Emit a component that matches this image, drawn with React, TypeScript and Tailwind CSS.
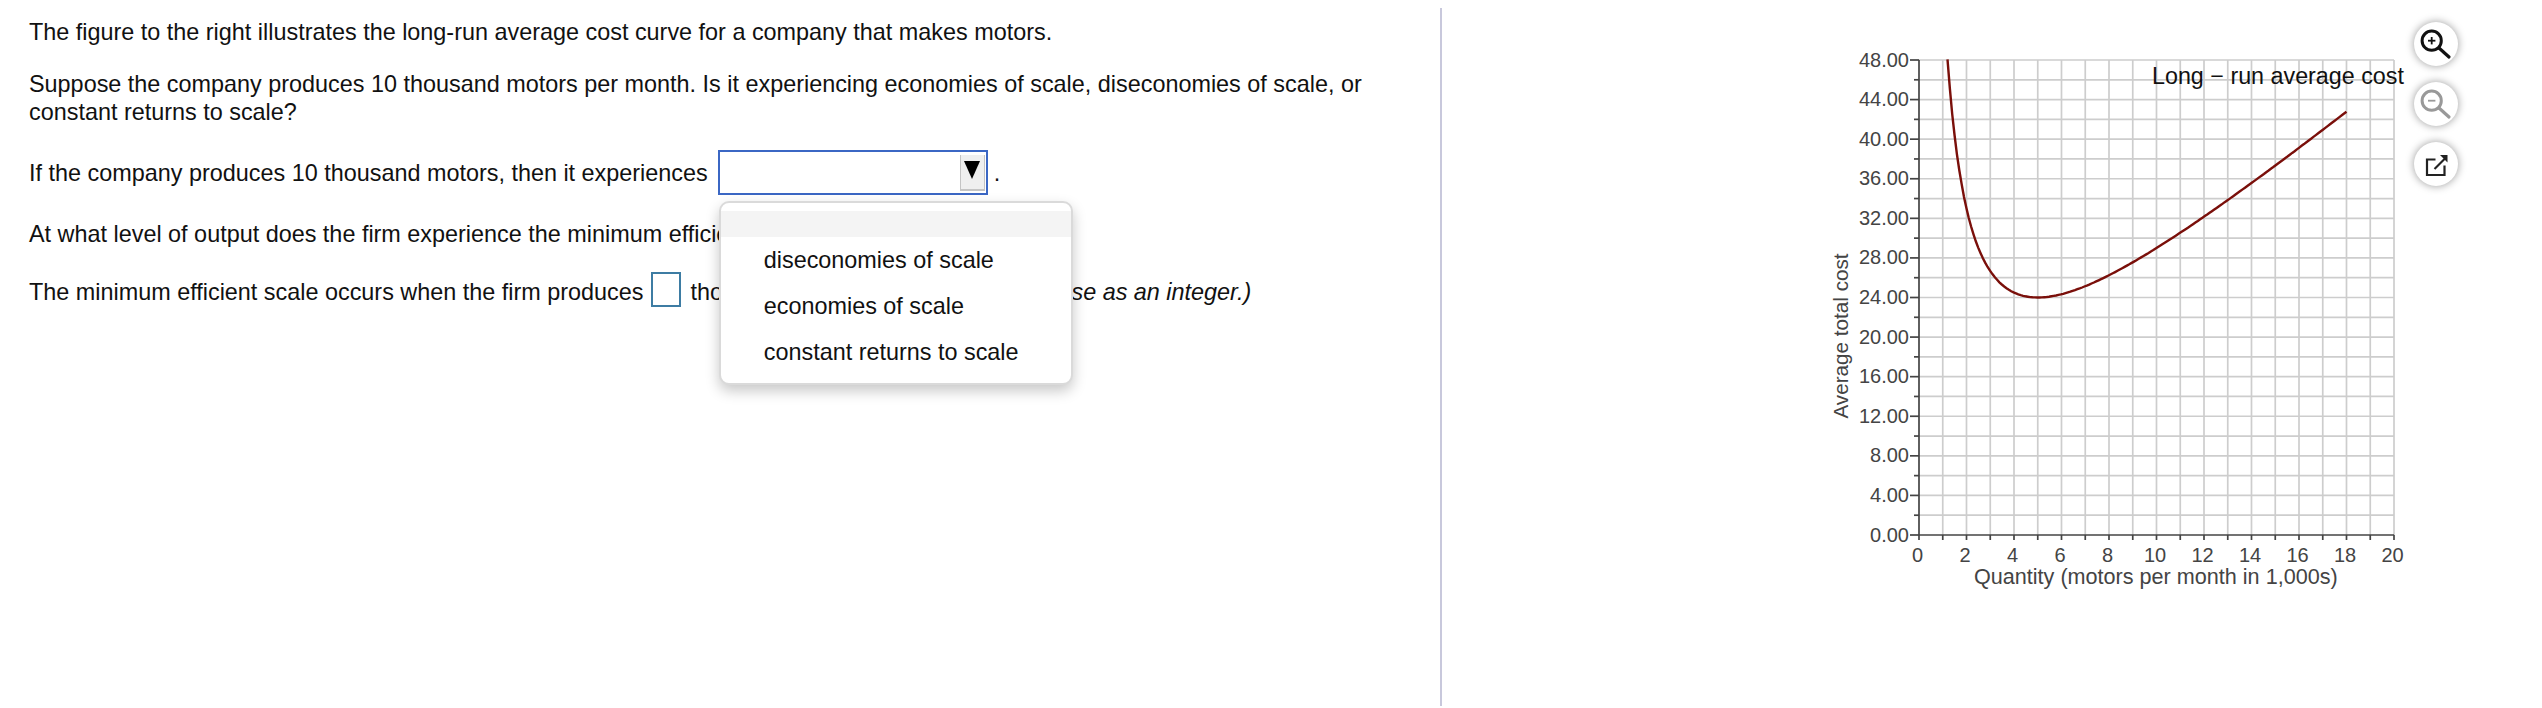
const OX = 89;
const OY = 20;
const W = 475;
const H = 475;

const xs = Array.from({ length: 21 }, (_, i) => i);
const ys = Array.from({ length: 25 }, (_, i) => i * 2);

const px = (q: number) => OX + (q / 20) * W;
const py = (c: number) => OY + H - (c / 48) * H;

function cost(q: number) {
  return 50 / q + 2 * q + 4;
}

const curve = Array.from({ length: 170 }, (_, i) => 1.2 + (i / 169) * 16.8)
  .map((q) => `${px(q).toFixed(1)},${py(cost(q)).toFixed(1)}`)
  .join(' ');

function Chart() {
  return (
    <svg width="580" height="570" className="block shrink-0" fontFamily="'Liberation Sans', Arial, sans-serif">
      {xs.slice(1).map((i) => (
        <line key={i} x1={px(i)} x2={px(i)} y1={OY} y2={OY + H} stroke="#cdcdcd" strokeWidth="1.7" />
      ))}
      {ys.slice(1).map((v) => (
        <line key={v} x1={OX} x2={OX + W} y1={py(v)} y2={py(v)} stroke="#cdcdcd" strokeWidth="1.7" />
      ))}
      <line x1={OX} x2={OX} y1={OY} y2={OY + H} stroke="#444" strokeWidth="1.7" />
      <line x1={OX} x2={OX + W} y1={OY + H} y2={OY + H} stroke="#444" strokeWidth="1.7" />
      {ys.map((v) => (
        <line key={v} x1={v % 4 === 0 ? OX - 9 : OX - 5} x2={OX} y1={py(v)} y2={py(v)} stroke="#444" strokeWidth="1.7" />
      ))}
      {xs.map((i) => (
        <line key={i} x1={px(i)} x2={px(i)} y1={OY + H} y2={OY + H + 5} stroke="#444" strokeWidth="1.7" />
      ))}
      {ys
        .filter((v) => v % 4 === 0)
        .map((v) => (
          <text key={v} x={OX - 10} y={py(v) + 6.5} textAnchor="end" fontSize="20" fill="#444">
            {v.toFixed(2)}
          </text>
        ))}
      {xs
        .filter((i) => i % 2 === 0)
        .map((i) => (
          <text key={i} x={px(i) - 1.5} y={OY + H + 27} textAnchor="middle" fontSize="20" fill="#444">
            {i}
          </text>
        ))}
      <text x={144} y={OY + H + 49} fontSize="21.6" fill="#444">
        Quantity (motors per month in 1,000s)
      </text>
      <text transform="translate(18 296) rotate(-90)" y={0} textAnchor="middle" fontSize="20.7" fill="#444">
        Average total cost
      </text>
      <polyline points={curve} fill="none" stroke="#7a0f0a" strokeWidth="2.4" />
      <text x={322} y={44} fontSize="23.3" fill="#111">
        Long − run average cost
      </text>
    </svg>
  );
}

function ToolButton({ children }: { children: React.ReactNode }) {
  return (
    <button className="flex h-11 w-11 items-center justify-center rounded-full bg-white shadow-[0_0_8px_rgba(0,0,0,0.4)]">
      {children}
    </button>
  );
}

function Magnifier({ sign, color }: { sign: 'plus' | 'minus'; color: string }) {
  return (
    <svg width="32" height="32" viewBox="0 0 32 32" fill="none" stroke={color}>
      <circle cx="11.7" cy="12.7" r="9.6" strokeWidth="3" />
      <path d="M19 20 L29 29" strokeWidth="3.2" strokeLinecap="round" />
      <path d="M8 12.7 H15.4" strokeWidth="1.8" />
      {sign === 'plus' && <path d="M11.7 9 V16.4" strokeWidth="1.8" />}
    </svg>
  );
}

export default function App() {
  return (
    <main className="flex h-[708px] w-full overflow-hidden bg-white font-['Liberation_Sans',Arial,sans-serif] text-[23.4px] leading-[28px] text-[#111]">
      <section className="w-[1440px] shrink-0 pl-[29px] pt-[18px]">
        <p>The figure to the right illustrates the long-run average cost curve for a company that makes motors.</p>
        <p className="mt-6 w-[1345px]">
          Suppose the company produces 10 thousand motors per month. Is it experiencing economies of scale, diseconomies of scale, or constant returns to scale?
        </p>
        <div className="mt-6 flex h-[45px] items-center">
          <span>If the company produces 10 thousand motors, then it experiences</span>
          <div className="relative ml-[10px] flex h-[45px] w-[270px] items-center justify-end border-2 border-[#3b67c4] pr-[1px]">
            <div className="flex h-9 w-[25px] items-start justify-center border-x border-b-2 border-[#c4c4c4] bg-[#efefef] pt-[6px]">
              <div className="h-0 w-0 border-x-[8px] border-t-[18px] border-x-transparent border-t-black" />
            </div>
            <div className="absolute left-[-1px] top-[49px] z-10 w-[354px] rounded-[10px] border-2 border-[#dadada] bg-white py-2 shadow-[0_6px_14px_rgba(0,0,0,0.22)]">
              <div className="h-[26px] bg-[#f4f4f4]" />
              <div className="flex h-[46px] items-center pl-[43px]">diseconomies of scale</div>
              <div className="flex h-[46px] items-center pl-[43px]">economies of scale</div>
              <div className="flex h-[46px] items-center pl-[43px]">constant returns to scale</div>
            </div>
          </div>
          <span className="ml-[6px]">.</span>
        </div>
        <p className="mt-[25px]">At what level of output does the firm experience the minimum efficient scale?</p>
        <div className="mt-[24px] flex h-[35px] items-center">
          <span className="mt-[5px]">The minimum efficient scale occurs when the firm produces</span>
          <div className="ml-2 h-[35px] w-[30px] border-2 border-[#3d7ca3]" />
          <span className="ml-[9px] mt-[5px]">
            thousand motors. <i>(Enter your response as an integer.)</i>
          </span>
        </div>
      </section>
      <div className="mt-2 h-[698px] w-[2px] shrink-0 bg-[#c8c8dc]" />
      <section className="flex flex-1 pl-[388px] pt-10">
        <Chart />
        <div className="ml-1 mt-[-18px] flex flex-col gap-4">
          <ToolButton>
            <Magnifier sign="plus" color="#111" />
          </ToolButton>
          <ToolButton>
            <Magnifier sign="minus" color="#999" />
          </ToolButton>
          <ToolButton>
            <svg width="28" height="28" viewBox="0 0 28 28" fill="none" stroke="#222" strokeWidth="2.2">
              <path d="M13.5 9.5 H5 V25 H22.5 V15.5" />
              <path d="M12.5 19 L23 8.5" />
              <path d="M18 5 H25.5 V12.5 Z" fill="#222" stroke="none" />
            </svg>
          </ToolButton>
        </div>
      </section>
    </main>
  );
}
